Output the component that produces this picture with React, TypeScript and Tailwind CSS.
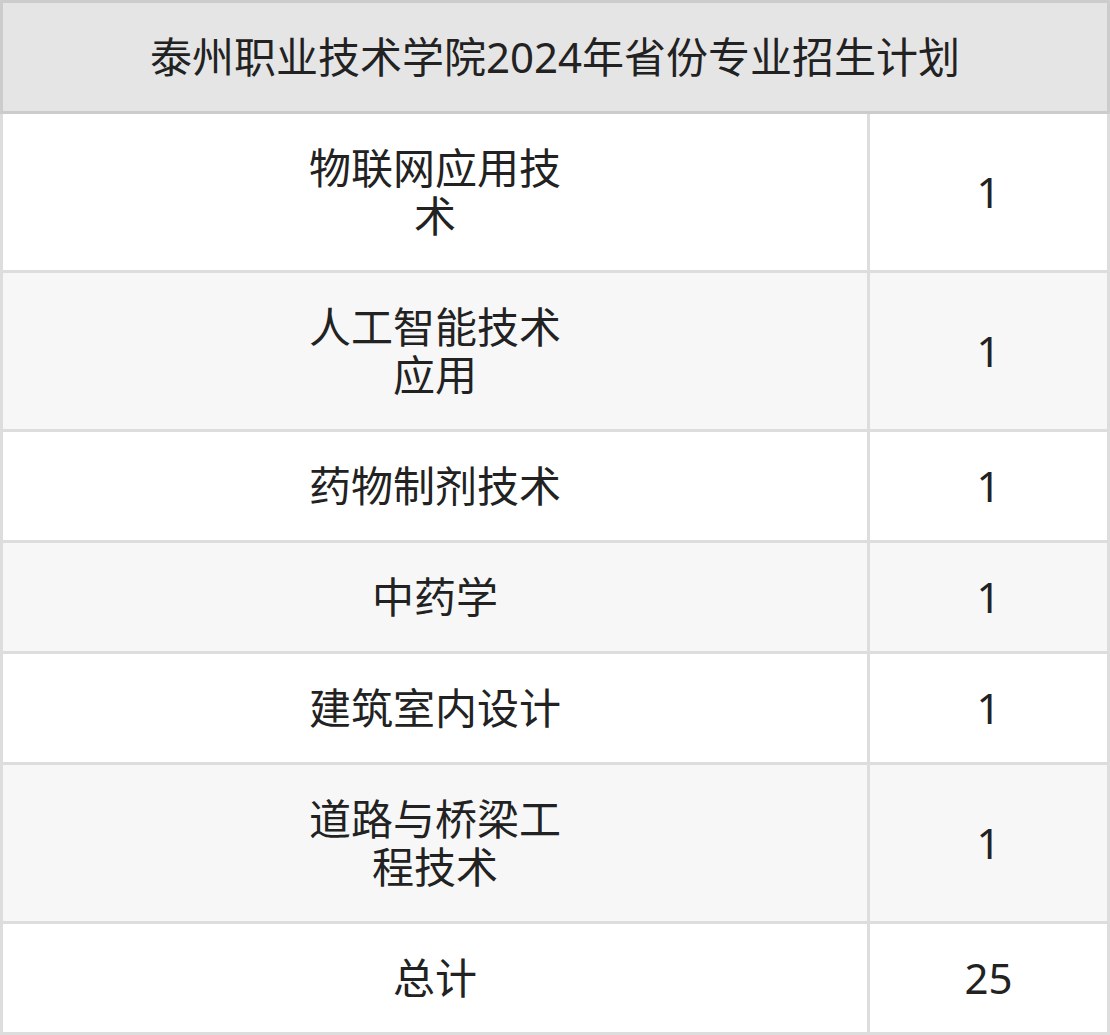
import React from "react";

const rows: { name: string; count: string }[] = [
  { name: "物联网应用技术", count: "1" },
  { name: "人工智能技术应用", count: "1" },
  { name: "药物制剂技术", count: "1" },
  { name: "中药学", count: "1" },
  { name: "建筑室内设计", count: "1" },
  { name: "道路与桥梁工程技术", count: "1" },
  { name: "总计", count: "25" },
];

export default function App() {
  return (
    <div
      className="w-[1110px] bg-white text-[#222] text-[42px] leading-[48px]"
      style={{ fontFamily: '"Noto Sans", "Noto Sans CJK SC", sans-serif' }}
    >
      <div className="border-[3px] border-[#ccc] bg-[#e5e5e5] py-[30px] text-center">
        泰州职业技术学院2024年省份专业招生计划
      </div>
      {rows.map((r, i) => (
        <div
          key={i}
          className={`flex border-x-[3px] border-b-[3px] border-[#ddd] ${
            i % 2 === 1 ? "bg-[#f7f7f7]" : "bg-white"
          }`}
        >
          <div className="w-[867px] shrink-0 border-r-[3px] border-[#ddd] py-[30px] flex justify-center">
            <span className="inline-block max-w-[260px] text-center">{r.name}</span>
          </div>
          <div className="flex-1 flex items-center justify-center">{r.count}</div>
        </div>
      ))}
    </div>
  );
}
